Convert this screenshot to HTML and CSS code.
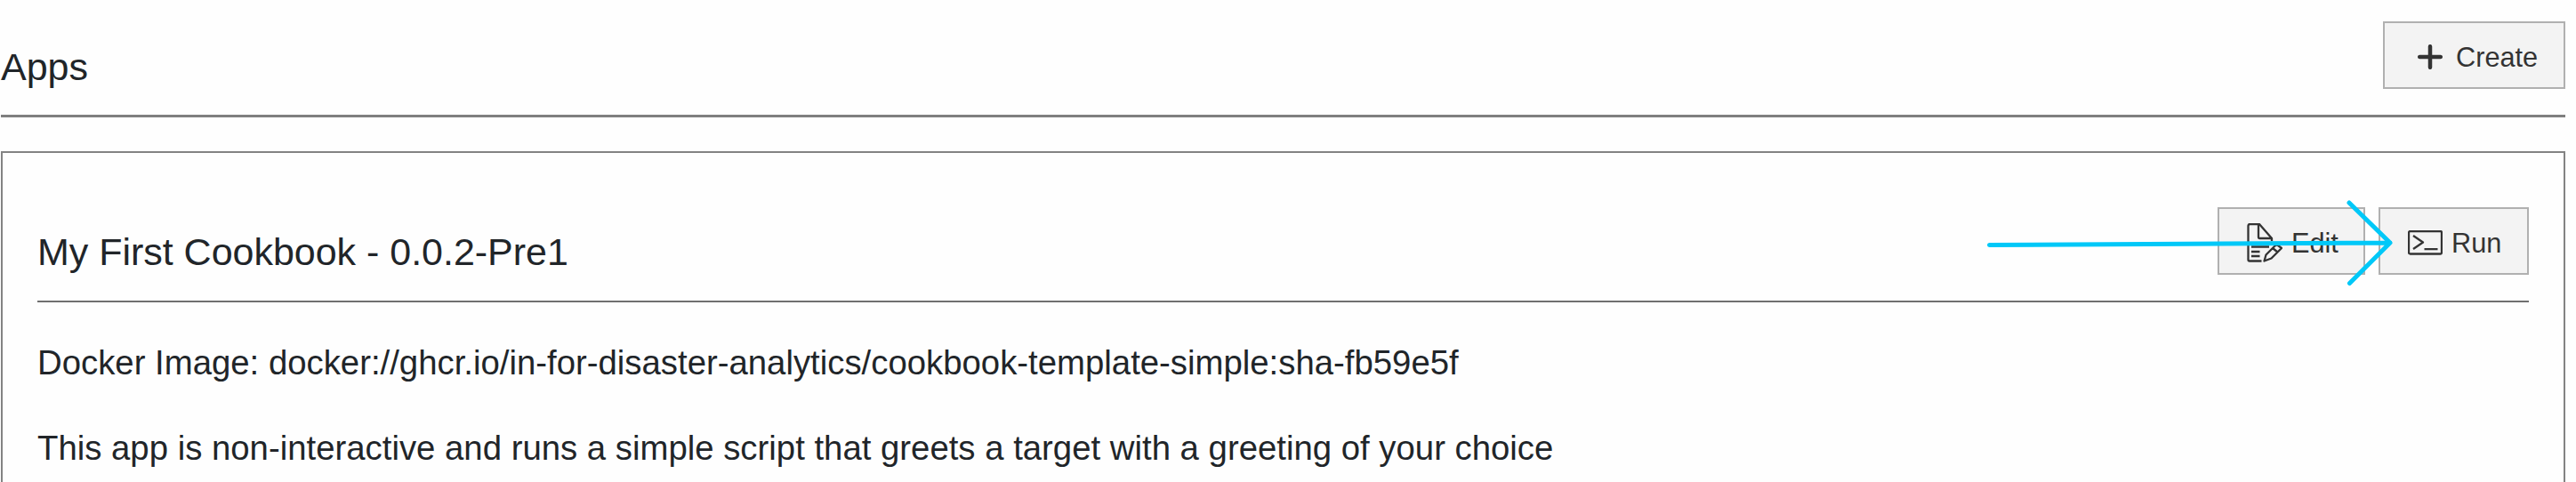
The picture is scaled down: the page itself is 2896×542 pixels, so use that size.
FILE: index.html
```html
<!DOCTYPE html>
<html lang="en">
<head>
<meta charset="utf-8">
<title>Apps</title>
<link rel="stylesheet" href="styles.css">
</head>
<body>
<main class="page">
  <header class="page-header">
    <h1 class="heading">Apps</h1>
    <button class="btn btn-create">
      <svg class="icon-plus" viewBox="0 0 28 28"><path d="M14 2.2v23.6M2.2 14h23.6"/></svg>
      <span>Create</span>
    </button>
  </header>
  <section class="card">
    <div class="card-header">
      <h2 class="heading card-title">My First Cookbook - 0.0.2-Pre1</h2>
      <div class="actions">
        <button class="btn btn-edit">
          <svg class="icon-edit" viewBox="0 0 40 44"><path d="M28 17L14 1H3.500Q1.500 1 1.500 3V41Q1.500 42.500 3 42.500H16.500M13 1.500V15.500Q13 17 14.500 17H28V20M5 26.500H25M5 32H14.500M5 37H14.500M19.500 42.500L21.500 35.500L31 26Q33 24 35 25L39 28L27.500 39.500ZM29 28L34.500 32.500"/></svg>
          <span>Edit</span>
        </button>
        <button class="btn btn-run">
          <svg class="icon-run" viewBox="0 0 39 28"><rect x="1" y="1" width="37" height="25.500" rx="1.500"/><path d="M6 6L17 13.500L6 21M18.500 21.200H33.500"/></svg>
          <span>Run</span>
        </button>
        <svg class="arrow" viewBox="0 0 460 100"><path d="M6.500 50.500L457 48M411 3L457 48L411.500 93.500"/></svg>
      </div>
    </div>
    <p class="text text-image">Docker Image: docker://ghcr.io/in-for-disaster-analytics/cookbook-template-simple:sha-fb59e5f</p>
    <p class="text text-desc">This app is non-interactive and runs a simple script that greets a target with a greeting of your choice</p>
  </section>
</main>
</body>
</html>
```
FILE: styles.css
```css
* { box-sizing: border-box; }
body {
  margin: 0;
  height: 542px;
  overflow: hidden;
  background: #fefefe;
  color: #212529;
  font-family: "Liberation Sans", Arial, sans-serif;
}
.page { width: 2883px; margin-left: 1px; padding-top: 24px; }
.page-header {
  display: flex;
  justify-content: space-between;
  height: 108px;
  border-bottom: 3px solid #7f7f7f;
}
.heading {
  margin: 0;
  padding-top: 27px;
  font-size: 43px;
  line-height: 48px;
  font-weight: 400;
  white-space: nowrap;
}
.btn {
  display: flex;
  align-items: center;
  height: 76px;
  padding: 4px 0 0;
  border: 2px solid #b0b0b0;
  background: #f3f3f3;
  color: #333;
  font: 30.700px/36px "Liberation Sans", Arial, sans-serif;
}
.btn svg { flex: none; fill: none; stroke: #333; stroke-width: 2.300; stroke-linejoin: round; }
.btn-create { width: 205px; padding-left: 37px; }
.btn-create .icon-plus { width: 28px; height: 28px; margin-right: 15px; stroke-width: 4.500; stroke-linecap: round; }
.btn span { padding-top: 2px; }
.card {
  height: 372px;
  margin-top: 38px;
  padding: 60px 39px 0;
  border: 2px solid #838383;
  border-bottom: 0;
}
.card-header {
  display: flex;
  justify-content: space-between;
  height: 108px;
  border-bottom: 2px solid #707070;
}
.card-title { letter-spacing: -0.020px; }
.actions { position: relative; display: flex; gap: 15px; padding-top: 1px; }
.btn-edit { width: 166px; padding-left: 31px; }
.btn-run { width: 169px; padding-left: 30.500px; }
.icon-edit { width: 40px; height: 44px; margin-right: 10px; }
.icon-run { width: 39px; height: 28px; margin-right: 10.500px; }
/* Pointer drawn across the actions toward Run */
.arrow {
  position: absolute;
  right: 153px;
  top: -7px;
  width: 460px;
  height: 100px;
  fill: none;
  stroke: #00c8f8;
  stroke-width: 5;
  stroke-linecap: round;
  stroke-linejoin: round;
}
.text { margin: 0; font-size: 38.350px; line-height: 44px; white-space: nowrap; }
.text-image { margin-top: 46px; }
.text-desc { margin-top: 52px; }
```
